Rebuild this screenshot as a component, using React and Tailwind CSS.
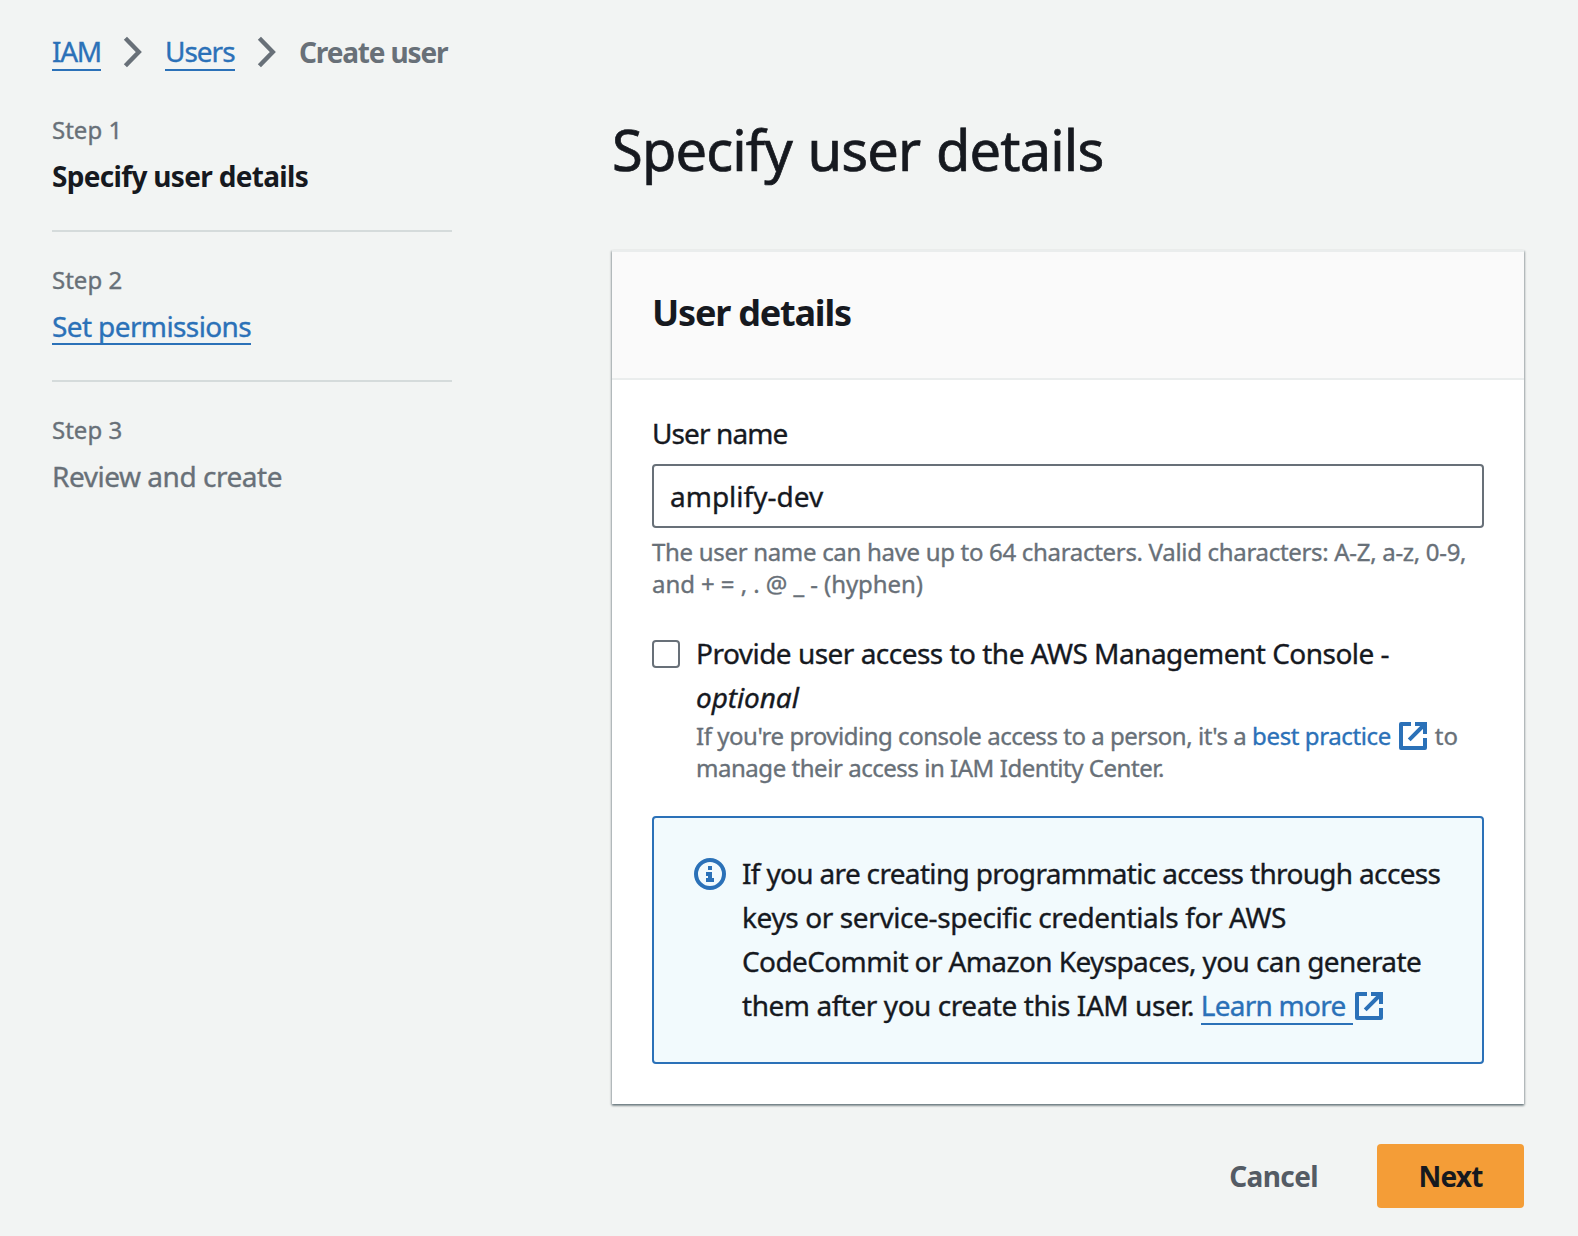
function Chevron() {
  return (
    <svg className="h-8 w-5 shrink-0" viewBox="0 0 20 32" fill="none" stroke="#687078" strokeWidth="4.4">
      <path d="M2.4 2.2 15.8 16 2.4 29.8" />
    </svg>
  );
}

function ExternalIcon({ className }) {
  return (
    <svg className={`inline-block size-7 shrink-0 ${className}`} viewBox="0 0 28 28" fill="none" stroke="#2b71b8" strokeWidth="4">
      <path d="M12 2H2v24h24V16" strokeLinejoin="round" />
      <path d="M16 2h10v10M10.2 17.8 26 2" />
    </svg>
  );
}

function InfoIcon() {
  return (
    <svg className="mt-[2px] size-8 shrink-0" viewBox="0 0 32 32" fill="#2b71b8">
      <circle cx="16" cy="16" r="14" fill="none" stroke="#2b71b8" strokeWidth="4" />
      <path d="M14 8h4v4h-4zM12 14h6v6h2v4h-8v-4h2v-2h-2z" />
    </svg>
  );
}

function Step({ label, children, last }) {
  return (
    <li className={last ? "" : "mb-8 h-[118px] border-b-2 border-[#d5dbdb]"}>
      <div className="text-[24px] leading-8 text-[#687078]">{label}</div>
      <div className="mt-2 leading-[44px]">{children}</div>
    </li>
  );
}

const link = "inline-block border-b-2 border-[#2b71b8] text-[#2b71b8]";

export default function App() {
  return (
    <div className="h-[1236px] w-[1578px] overflow-hidden whitespace-nowrap bg-[#f2f4f3] pl-[52px] pr-[54px] pt-[29px] font-['Noto_Sans',sans-serif] text-[28px] leading-[44px] text-[#16191f] [-webkit-text-stroke:0.35px]">
      <nav className="flex h-[46px] items-center">
        <a className={`${link} w-[49px] leading-[36px] tracking-[-1.27px]`}>IAM</a>
        <div className="flex w-[64px] justify-center"><Chevron /></div>
        <a className={`${link} w-[70px] leading-[36px] tracking-[-1.02px]`}>Users</a>
        <div className="flex w-[64px] justify-center"><Chevron /></div>
        <span className="font-bold tracking-[-1.15px] text-[#687078] [-webkit-text-stroke:0]">Create user</span>
      </nav>

      <div className="flex">
        <ol className="mt-[39px] w-[400px]">
          <Step label="Step 1">
            <span className="font-bold tracking-[-0.68px] [-webkit-text-stroke:0]">Specify user details</span>
          </Step>
          <Step label="Step 2">
            <a className={`${link} leading-[34px] tracking-[-0.61px]`}>Set permissions</a>
          </Step>
          <Step label="Step 3" last>
            <span className="tracking-[-0.47px] text-[#687078]">Review and create</span>
          </Step>
        </ol>

        <main className="ml-[160px] mt-[39px] w-[912px]">
          <h1 className="text-[56px] leading-[70px] tracking-[-0.86px] [word-spacing:2px] [-webkit-text-stroke:0.7px]">Specify user details</h1>

          <section className="mt-[66px] h-[854px] border-t-2 border-[#eaeded] bg-white shadow-[0_2px_2px_0_rgba(0,28,36,0.3),1px_1px_2px_0_rgba(0,28,36,0.25),-1px_1px_2px_0_rgba(0,28,36,0.25)]">
            <header className="flex h-[128px] items-center border-b-2 border-[#eaeded] bg-[#fafafa] px-10">
              <h2 className="pb-1 text-[36px] font-bold leading-[44px] tracking-[-1.2px] [-webkit-text-stroke:0]">User details</h2>
            </header>

            <div className="px-10 pt-[31px]">
              <label className="block tracking-[-0.9px]">User name</label>
              <div className="mt-[9px] flex h-16 items-center rounded-[4px] border-2 border-[#687078] bg-white px-4">
                <span>amplify-dev</span>
              </div>
              <p className="mt-2 text-[24px] leading-8 text-[#687078]">
                <span className="tracking-[-0.31px]">The user name can have up to 64 characters. Valid characters: A-Z, a-z, 0-9,</span>
                <br />
                <span className="tracking-[-0.07px]">and + = , . @ _ - (hyphen)</span>
              </p>

              <div className="mt-[31px] flex gap-4">
                <div className="mt-[9px] size-7 shrink-0 rounded-[4px] border-2 border-[#687078] bg-white" />
                <div>
                  <div className="tracking-[-0.52px]">Provide user access to the AWS Management Console -</div>
                  <div className="italic tracking-[-0.1px]">optional</div>
                  <div className="mt-px flex h-8 items-center text-[24px] leading-8 text-[#687078]">
                    <span className="whitespace-pre tracking-[-0.47px]">{"If you're providing console access to a person, it's a "}</span>
                    <a className="tracking-[-0.39px] text-[#2b71b8]">best practice</a>
                    <ExternalIcon className="ml-2 mr-2" />
                    <span>to</span>
                  </div>
                  <div className="text-[24px] leading-8 tracking-[-0.46px] text-[#687078]">
                    manage their access in IAM Identity Center.
                  </div>
                </div>
              </div>

              <div className="mt-8 flex h-[248px] gap-4 rounded-[4px] border-2 border-[#2b71b8] bg-[#f2fafd] px-10 pt-[33px]">
                <div className="pt-[5px]"><InfoIcon /></div>
                <div>
                  <div className="tracking-[-0.67px]">If you are creating programmatic access through access</div>
                  <div className="tracking-[-0.39px]">keys or service-specific credentials for AWS</div>
                  <div className="tracking-[-0.61px]">CodeCommit or Amazon Keyspaces, you can generate</div>
                  <div className="flex">
                    <span className="whitespace-pre tracking-[-0.45px]">{"them after you create this IAM user. "}</span>
                    <a className="mt-[2px] h-10 w-[152px] border-b-2 border-[#2b71b8] leading-[40px] tracking-[-0.75px] text-[#2b71b8]">Learn more</a>
                    <ExternalIcon className="ml-[2px] mt-[9px]" />
                  </div>
                </div>
              </div>
            </div>
          </section>

          <div className="mt-10 flex h-16 items-center justify-end">
            <button className="mr-[59px] font-bold tracking-[-0.6px] text-[#545b64] [-webkit-text-stroke:0]">Cancel</button>
            <button className="h-16 w-[147px] rounded-[4px] bg-[#f49d37] font-bold tracking-[-0.8px] [-webkit-text-stroke:0]">Next</button>
          </div>
        </main>
      </div>
    </div>
  );
}
